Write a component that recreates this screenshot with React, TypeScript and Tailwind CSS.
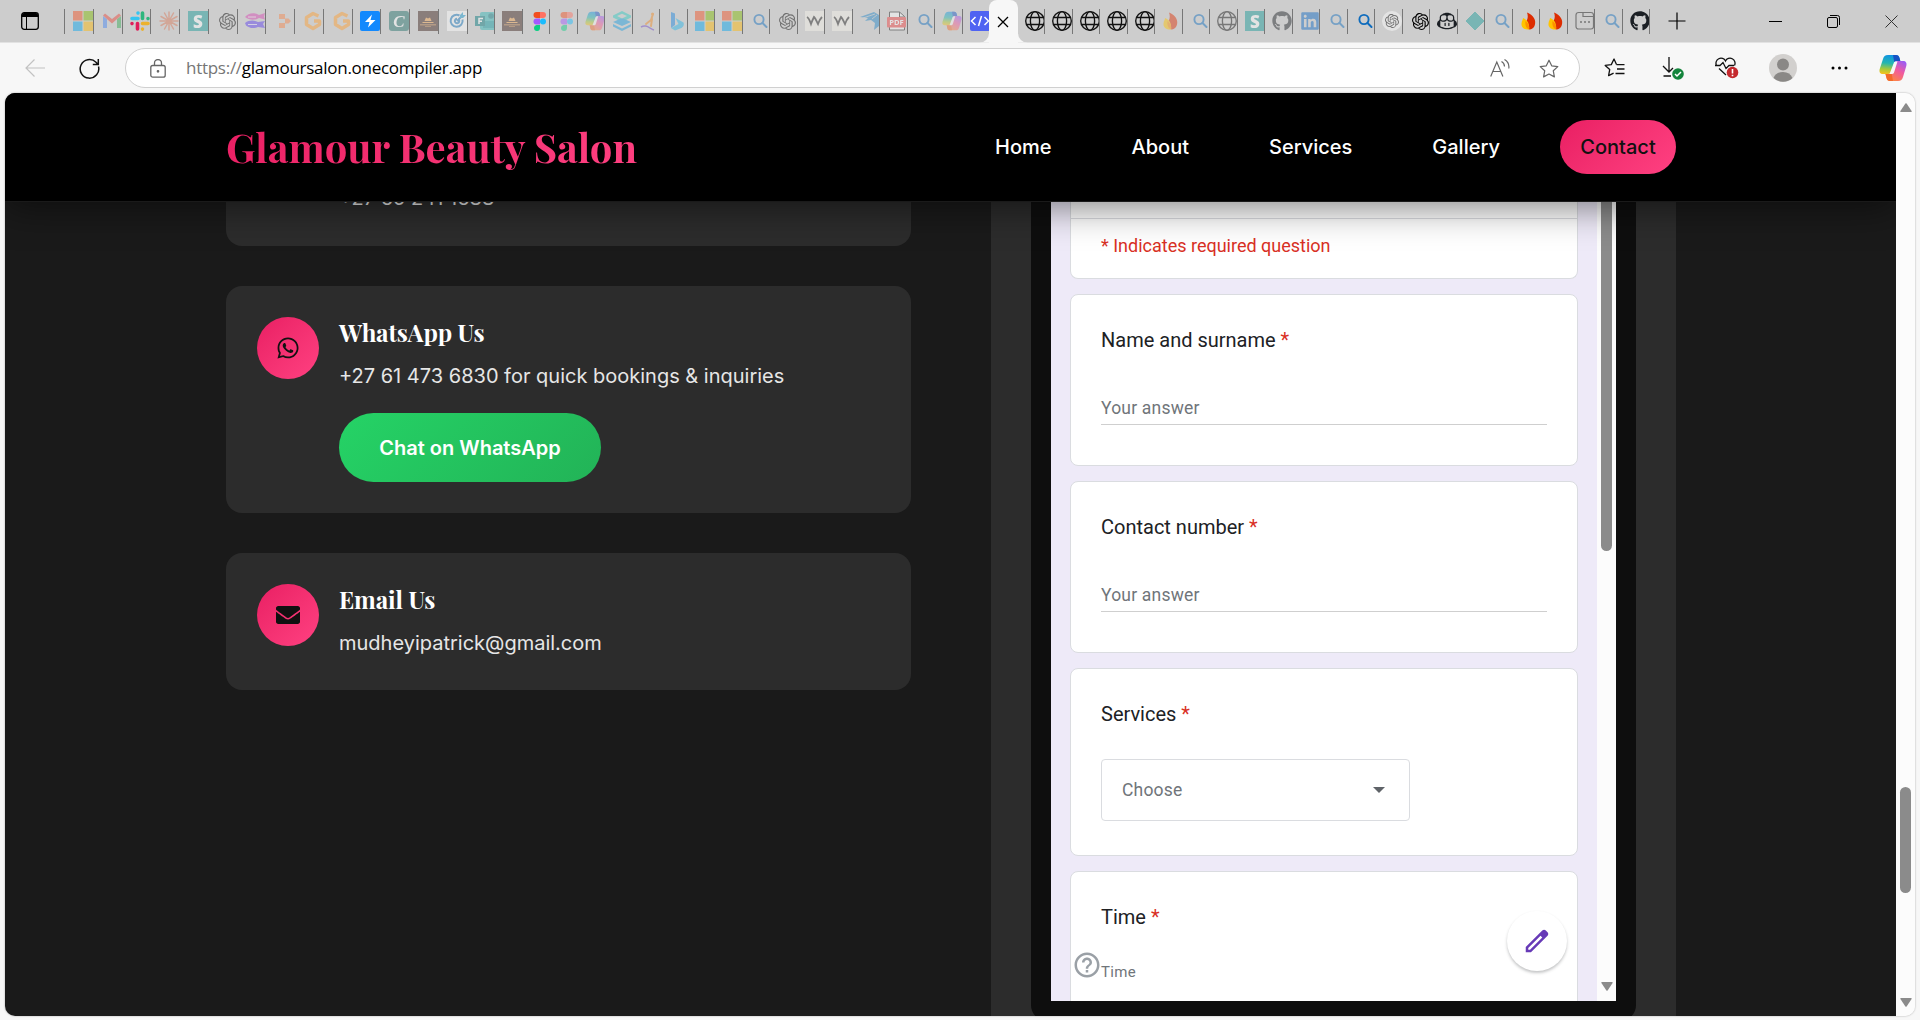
import React from 'react';
import { FaWhatsapp, FaEnvelope, FaGithub, FaLinkedin } from 'react-icons/fa';
import { SiOpenai } from 'react-icons/si';
import { GoCopilot } from 'react-icons/go';

type IconFn = () => React.ReactElement;

const Svg = ({ children, box = '0 0 20 20' }: { children: React.ReactNode; box?: string }) => (
  <svg viewBox={box} className="h-5 w-5 shrink-0" fill="none">{children}</svg>
);

const Microsoft: IconFn = () => (
  <Svg>
    <path fill="#f25022" d="M0 0h9.5v9.5H0z" /><path fill="#7fba00" d="M10.5 0H20v9.5h-9.5z" />
    <path fill="#00a4ef" d="M0 10.5h9.5V20H0z" /><path fill="#ffb900" d="M10.5 10.5H20V20h-9.5z" />
  </Svg>
);
const Gmail: IconFn = () => (
  <Svg>
    <path fill="#4285f4" d="M1 5v12h4V8z" /><path fill="#34a853" d="M15 8v9h4V5z" />
    <path fill="#ea4335" d="M1 4.500l2-2 7 5.500 7-5.500 2 2L10 12.500z" />
  </Svg>
);
const Slack: IconFn = () => (
  <Svg>
    <g strokeWidth="3.600" strokeLinecap="round">
      <path stroke="#36c5f0" d="M8 2v.1M2 7.500h6" /><path stroke="#2eb67d" d="M12.500 2v5.500M18 7.500v.1" />
      <path stroke="#e01e5a" d="M7.500 12.500V18M2 12.500v.1" /><path stroke="#ecb22e" d="M12.500 12.500H18M12.500 18v.1" />
    </g>
  </Svg>
);
const Claude: IconFn = () => (
  <Svg><path stroke="#d97757" strokeWidth="1.500" strokeLinecap="round" d="M10 1v18M1 10h18M5.500 2l9 16M14.500 2l-9 16M2 5.500l16 9M18 5.500l-16 9" /></Svg>
);
const SBox: IconFn = () => (
  <div className="flex h-5 w-5 items-center justify-center bg-[#159a98] font-['Open_Sans',sans-serif] text-[17px] leading-none font-extrabold text-white">S</div>
);
const OpenAI: IconFn = () => <SiOpenai className="h-[17px] w-[17px] text-black" />;
const OpenAIDisc: IconFn = () => (
  <div className="flex h-5 w-5 items-center justify-center rounded-full bg-white"><SiOpenai className="h-3.5 w-3.5 text-black" /></div>
);
const Fish: IconFn = () => (
  <Svg>
    <path fill="#d846b4" d="M0 6c3-4 9-5 14-2l6-2-1 3.500 1 3L14 7C9 10 4 9 0 6z" />
    <path fill="#5b3df0" d="M0 12c4-3 9-3 13-1l7-1-2 3 2 4-7-1C8 18 4 17 1 14.500z" />
    <path stroke="#fff" strokeWidth=".8" d="M3 6h8M3 13.500h9" />
  </Svg>
);
const Blocks: IconFn = () => (
  <Svg><path fill="#f58549" d="M5 3h6v5H5zM5 12h6v5H5zM11 7.500h3.500L17 10l-2.500 2.500H11z" /></Svg>
);
const GLetter: IconFn = () => (
  <Svg><path stroke="#ff9d2e" strokeWidth="3.500" strokeLinejoin="round" d="M15.500 5L10 2.500 3.500 6.500v7L10 17.500l6.500-4V10H11" /></Svg>
);
const Bolt: IconFn = () => (
  <Svg><rect width="20" height="20" rx="2" fill="#1389fd" /><path fill="#fff" d="M12 3.500L5 11h4.500L8 16.500 15.500 9h-5z" /></Svg>
);
const CBox: IconFn = () => (
  <div className="flex h-5 w-5 items-center justify-center rounded-[3px] bg-[#1f6f68] font-['Liberation_Serif',serif] text-[17px] leading-none font-bold text-white italic">C</div>
);
const HatBox: IconFn = () => (
  <Svg><path fill="#3b1f1a" d="M0 0h20v20H0z" /><path fill="#f0a048" d="M6.500 10L8 6.500l2 1 2-1 1.500 3.500zM4.500 11h11v1h-11zM2 13.500h16v.8H2zM7 15.500h6v.6H7z" /></Svg>
);
const Target: IconFn = () => (
  <Svg>
    <path fill="#fff" d="M0 0h20v20H0z" />
    <path stroke="#1b7dc4" strokeWidth="2" d="M12.500 4.500a6 6 0 1 0 3 4M10 10l6-6M12 9a2.200 2.200 0 1 1-2-1.200" /><path fill="#1b9dd4" d="M13 4l3-3v3h3l-3 3h-3z" />
  </Svg>
);
const FormsIcon: IconFn = () => (
  <Svg>
    <rect x="5" y="1" width="15" height="18" rx="2" fill="#2fb5b5" /><circle cx="16" cy="5" r="2.800" fill="#087a80" />
    <path fill="#0b9aa0" d="M8 10h12v7H8z" /><path fill="#03787c" d="M0 5h10v10H0z" /><path stroke="#fff" strokeWidth="1.500" d="M4 13V7.500h4M4 10.200h3" />
  </Svg>
);
const Figma: IconFn = () => (
  <Svg>
    <path fill="#f24e1e" d="M10 1H6.500a3 3 0 0 0 0 6H10z" /><path fill="#ff7262" d="M10 1h3a3 3 0 0 1 0 6h-3z" />
    <path fill="#a259ff" d="M10 7.500H6.500a3 3 0 0 0 0 6H10z" /><circle cx="13" cy="10.500" r="3" fill="#1abcfe" />
    <path fill="#0acf83" d="M10 14H6.500a3 3 0 1 0 3.500 3z" />
  </Svg>
);
const Copilot = ({ className = 'h-5 w-5' }: { className?: string }) => (
  <svg viewBox="0 0 28 28" className={className} fill="none">
    <defs>
      <linearGradient id="cpA" x1="8" y1="0" x2="6" y2="20" gradientUnits="userSpaceOnUse"><stop stopColor="#0d8fe8" /><stop offset=".45" stopColor="#24b6b0" /><stop offset=".75" stopColor="#a5c93b" /><stop offset="1" stopColor="#f7c21b" /></linearGradient>
      <linearGradient id="cpB" x1="24" y1="7" x2="12" y2="27" gradientUnits="userSpaceOnUse"><stop stopColor="#9a5cf5" /><stop offset=".45" stopColor="#f05aa0" /><stop offset="1" stopColor="#ff8a3a" /></linearGradient>
    </defs>
    <path fill="url(#cpA)" d="M9 1h8c2 0 3 1 3.500 3l.8 3h-3c-2 0-3 1-3.600 3l-2 7c-.7 2-1.700 3-3.700 3H4C1 20 0 18 .7 15L4 5c.8-2.600 2-4 5-4z" />
    <path fill="#1752c4" d="M14 1h3c2 0 3 1 3.500 3l.8 3h-3c-1.500 0-2.500.6-3 1.500z" />
    <path fill="url(#cpB)" d="M19 27h-8c-2 0-3-1-3.500-3l-1-4h3c2 0 3-1 3.600-3l2-7c.6-2 1.600-3 3.600-3H24c3 0 4 2 3.300 5L24 23c-.8 2.600-2 4-5 4z" />
    <path fill="#f26a2a" d="M14 27h-3c-2 0-3-1-3.500-3l-1-4h3c1.500 0 2.500-.6 3-1.500z" />
    <path fill="#f7f7f7" d="M15 8.500q.4-1 1.500-1h2L15 18.500q-.5 1.500-2 1.500h-2.500z" />
  </svg>
);
const CopilotTab: IconFn = () => <Copilot />;
const Stack: IconFn = () => (
  <Svg><path fill="#2fc9c0" d="M10 0l9 4.500v2L10 11 1 6.500v-2z" /><path fill="#1a9de0" d="M10 7l9 4-9 4-9-4zM1 13l9 4.500 9-4.500v2.500L10 20l-9-4.500z" /><path fill="#cdcdcd" d="M10 2.800l5 2.300-5 2.400-5-2.400z" /></Svg>
);
const Runner: IconFn = () => (
  <Svg><path stroke="#f08a24" strokeWidth="2" strokeLinecap="round" d="M13 3l-2 6-5 4M12 8l-1 7" /><circle cx="12.500" cy="3" r="1.500" fill="#f08a24" /><path stroke="#7048c8" strokeWidth="1.500" d="M1 16c5-3 8 1 13 3" /></Svg>
);
const Bing: IconFn = () => (
  <Svg><path fill="#1a86e0" d="M4 1l4 1.500V14l-4 3z" /><path fill="#27b4e8" d="M8.500 7l8 4.500c1 3-.5 4.500-2 5.500L8 19.500 4 17l7.500-4z" /></Svg>
);
const Search: IconFn = () => (
  <Svg><circle cx="9" cy="8.500" r="4.600" stroke="#0f6cbd" strokeWidth="1.900" /><path stroke="#0f6cbd" strokeWidth="2" strokeLinecap="round" d="M12.500 12l4 4" /></Svg>
);
const WBox: IconFn = () => (
  <Svg><path fill="#f5f3ea" d="M0 0h20v20H0z" /><path stroke="#222" strokeWidth="1.800" d="M2 6c2 1 3 4 4 7 1-3 2-5 3-7 2 2 2.500 4 4 7 1-3 2-5 4-7" /></Svg>
);
const Bird: IconFn = () => (
  <Svg><path fill="#2286c8" d="M0 6L14 1l5 3v11l-5 4 1-7-4-3-6 1 3-3z" /><path stroke="#cdcdcd" strokeWidth=".8" d="M3 7l12-4M12 8l5-4" /></Svg>
);
const Pdf: IconFn = () => (
  <Svg>
    <path fill="#fff" stroke="#222" d="M2.500 1h10l5 4.500V19h-15z" /><path stroke="#222" d="M12.500 1v5h5" />
    <rect x="0" y="6" width="19" height="10.500" rx="1" fill="#f04040" />
    <text x="9.500" y="14" textAnchor="middle" fill="#fff" className="font-['Open_Sans',sans-serif] text-[7.500px] font-bold">PDF</text>
  </Svg>
);
const Code: IconFn = () => (
  <Svg><rect width="20" height="20" rx="2" fill="#4f63f2" /><path stroke="#fff" strokeWidth="1.500" d="M5.500 6L1.500 10l4 4M14.500 6l4 4-4 4M11.500 5l-3 10" /></Svg>
);
const Globe: IconFn = () => (
  <Svg><g stroke="#111" strokeWidth="1.350"><circle cx="10" cy="10" r="9.300" /><ellipse cx="10" cy="10" rx="4.600" ry="9.300" /><path d="M1.500 6.500h17M1.500 13.500h17" /></g></Svg>
);
const Flame: IconFn = () => (
  <Svg><path fill="#dd2c00" d="M7 1.500C13 4 17 9 14.500 15c-1 2-3 3.500-5 3.500C6 17 5 12 7 9c1-2 1-5 0-7.500z" /><path fill="#ffc400" d="M3 7c3 1 7 4 6 11.500C4 19 1 16 1.500 12.500 1.700 10 3 9 3 7z" /><path fill="#ff9100" d="M5.500 10c3 2 4 5 3.800 8.500C6 17.500 5 14 5.500 10z" /></Svg>
);
const Github: IconFn = () => <FaGithub className="h-5 w-5 text-[#1b1f24]" />;
const Linkedin: IconFn = () => <FaLinkedin className="h-5 w-5 text-[#0a66c2]" />;
const CopilotFace: IconFn = () => <GoCopilot className="h-5 w-5 text-[#1b1f24]" />;
const Diamond: IconFn = () => (
  <Svg><path fill="#159a98" stroke="#159a98" strokeLinejoin="round" d="M10 1l9 9-9 9-9-9z" /></Svg>
);
const Panel: IconFn = () => (
  <Svg><g stroke="#111" strokeWidth="1.200"><rect x="1" y="1.500" width="17.500" height="16.500" rx="2.500" /><path d="M8 1.500v4h10" /></g><path stroke="#111" strokeWidth="1.500" d="M5 11h2M9 11h2M13 11h2" /></Svg>
);

type Tab = [number, IconFn, boolean?];

const leftTabs: Tab[] = [
  [29, Microsoft], [29, Gmail], [28, Slack, true], [29, Claude], [29, SBox], [29, OpenAI], [28, Fish], [29, Blocks],
  [29, GLetter], [29, GLetter], [28, Bolt, true], [29, CBox], [29, HatBox], [29, Target], [27, FormsIcon], [28, HatBox],
  [27, Figma, true], [28, Figma], [27, CopilotTab], [28, Stack], [27, Runner], [28, Bing], [27, Microsoft], [28, Microsoft],
  [27, Search], [28, OpenAI], [27, WBox], [28, WBox], [27, Bird], [28, Pdf], [27, Search], [28, CopilotTab],
];
const rightTabs: Tab[] = [
  [27, Globe, true], [28, Globe, true], [27, Globe, true], [28, Globe, true], [27, Globe, true], [28, Flame], [27, Search],
  [28, Globe], [27, SBox], [28, Github], [27, Linkedin], [28, Search], [27, Search, true], [28, OpenAIDisc], [27, OpenAI, true],
  [28, CopilotFace, true], [27, Diamond], [28, Search], [27, Flame, true], [28, Flame, true], [27, Panel], [28, Search], [27, Github, true],
];

const TabItem = ({ tab: [width, Icon, awake] }: { tab: Tab }) => (
  <div className={`flex h-[25px] shrink-0 items-center overflow-hidden border-r border-[#777] ${width === 29 ? 'pl-2' : 'pl-[7px]'}`} style={{ width }}>
    <div className={`flex h-5 w-5 shrink-0 items-center justify-center ${awake ? '' : 'opacity-45'}`}><Icon /></div>
  </div>
);

const TabStrip = () => (
  <div className="flex h-[43px] shrink-0 items-center border-b border-[#e2e2e2] bg-[#cdcdcd]">
    <svg viewBox="0 0 18 18" className="ml-[21px] h-[18px] w-[18px] shrink-0" fill="none">
      <rect x=".7" y=".7" width="16.600" height="16.600" rx="2.500" stroke="#000" strokeWidth="1.300" />
      <path fill="#000" d="M1 2.500Q1 1 3 1h12q2 0 2 1.500V5H1z" /><path stroke="#000" d="M5.500 5v12" />
    </svg>
    <div className="ml-[25px] h-[25px] w-px shrink-0 bg-[#777]" />
    <div className="flex shrink-0">{leftTabs.map((t, i) => <TabItem key={i} tab={t} />)}</div>
    <div className="flex w-[26px] shrink-0 overflow-hidden pl-[7px]"><Code /></div>
    <div className="relative flex h-[43px] w-[29px] shrink-0 items-center justify-center rounded-t-lg bg-[#f7f7f7] before:absolute before:bottom-0 before:-left-2.5 before:h-2.5 before:w-2.5 before:rounded-br-[10px] before:shadow-[5px_5px_0_4px_#f7f7f7] before:[clip-path:inset(0)] after:absolute after:-right-2.5 after:bottom-0 after:h-2.5 after:w-2.5 after:rounded-bl-[10px] after:shadow-[-5px_5px_0_4px_#f7f7f7] after:[clip-path:inset(0)]">
      <svg viewBox="0 0 12 12" className="mt-px mr-px h-3 w-3" stroke="#000" strokeWidth="1.300"><path d="M1 1l10 10M11 1L1 11" /></svg>
    </div>
    <div className="flex shrink-0">{rightTabs.map((t, i) => <TabItem key={i} tab={t} />)}</div>
    <svg viewBox="0 0 18 18" className="ml-[18px] h-[18px] w-[18px] shrink-0" stroke="#000" strokeWidth="1.200"><path d="M9 .5v17M.5 9h17" /></svg>
    <div className="mr-[22px] ml-auto flex items-center gap-[45px]">
      <svg viewBox="0 0 13 13" className="h-[13px] w-[13px]" stroke="#000"><path d="M0 6.500h13" /></svg>
      <svg viewBox="0 0 13 13" className="h-[13px] w-[13px]" fill="none" stroke="#000"><rect x=".5" y="2.500" width="10" height="10" rx="1.500" /><path d="M3 .5h7.500a2 2 0 0 1 2 2V10" /></svg>
      <svg viewBox="0 0 13 13" className="h-[13px] w-[13px]" stroke="#333"><path d="M.5.5l12 12M12.500.5l-12 12" /></svg>
    </div>
  </div>
);

const starPath = 'M10 1.200l2.700 5.600 6.100.8-4.500 4.200 1.100 6.100L10 15l-5.400 2.900 1.100-6.100L1.200 7.600l6.100-.8z';

const Toolbar = () => (
  <div className="flex h-[50px] shrink-0 items-center bg-[#f7f7f7]">
    <svg viewBox="0 0 20 18" className="ml-[25px] h-[18px] w-5 shrink-0" fill="none" stroke="#c2c2c2" strokeWidth="1.200"><path d="M20 9H1M9.500.5L1 9l8.500 8.500" /></svg>
    <svg viewBox="0 0 21 21" className="ml-[34px] h-[21px] w-[21px] shrink-0" fill="none" stroke="#111" strokeWidth="1.500"><path d="M19.500 8.500a9.300 9.300 0 1 1-2.500-4.300l2 2.300M19.300 1v5.500h-5.500" /></svg>
    <div className="ml-[25px] flex h-10 w-[1455px] shrink-0 items-center rounded-full border border-[#d0d0d0] bg-white">
      <svg viewBox="0 0 16 19" className="ml-6 h-[19px] w-4" fill="none" stroke="#666" strokeWidth="1.300"><rect x=".8" y="6.500" width="14.400" height="11.700" rx="2" /><path d="M4.500 6.500V4a3.500 3.500 0 0 1 7 0v2.500" /><circle cx="8" cy="12.300" r=".7" fill="#666" /></svg>
      <div className="ml-5 font-['Open_Sans',sans-serif] text-[17px] tracking-[-0.27px] whitespace-pre text-black"><span className="text-[#767676]">https://</span>glamoursalon.onecompiler.app</div>
      <svg viewBox="0 0 20 18" className="mr-[29px] ml-auto h-[18px] w-5" fill="none" stroke="#666" strokeWidth="1.200"><path d="M.7 17.500L6.800 3l6.100 14.500M3 12.500h7.600M11.500 2.500a6 6 0 0 1 3 5M14.500.5a9 9 0 0 1 4.300 9" /></svg>
      <svg viewBox="0 0 20 19" className="mr-5 h-[19px] w-5" fill="none" stroke="#666" strokeWidth="1.200" strokeLinejoin="round"><path d={starPath} /></svg>
    </div>
    <svg viewBox="0 0 21 20" className="ml-[24px] h-5 w-[21px] shrink-0" fill="none" stroke="#111" strokeWidth="1.300" strokeLinejoin="round"><path d="M12.500 6.500L10 1 7.300 6.600l-6.100.8 4.500 4.200-1.100 6.100 5-2.500M12.500 6.600h8M13 11h7.500M11.500 15.500h9" /></svg>
    <svg viewBox="0 0 22 24" className="ml-[37px] h-6 w-[22px] shrink-0" fill="none"><path stroke="#111" strokeWidth="1.300" d="M7 1v14.500M1 10l6 6 4-4M1.500 20H9" /><circle cx="16" cy="18" r="5.800" fill="#13843c" /><path stroke="#fff" strokeWidth="1.500" d="M13 18l2 2 4-4" /></svg>
    <svg viewBox="0 0 24 22" className="ml-[31px] h-[22px] w-6 shrink-0" fill="none"><path stroke="#111" strokeWidth="1.300" d="M1.500 8.500A5 5 0 0 1 10.500 4 5 5 0 0 1 19.500 8.500M0 8.500h5l3-3 3 6 3-3h5M4 11.500l7 6.500" /><circle cx="17.500" cy="15.500" r="5.800" fill="#c4282d" /><path stroke="#fff" strokeWidth="1.600" d="M17.500 12v4.500M17.500 17.700v1.500" /></svg>
    <svg viewBox="0 0 28 28" className="ml-[30px] h-7 w-7 shrink-0"><circle cx="14" cy="14" r="14" fill="#d2d0ce" /><circle cx="14" cy="10.500" r="6" fill="#8a8886" /><path fill="#8a8886" d="M4.500 24Q7 18 14 18t9.500 6A14 14 0 0 1 4.500 24z" /></svg>
    <svg viewBox="0 0 17 4" className="ml-[34px] h-1 w-[17px] shrink-0"><circle cx="2" cy="2" r="1.500" /><circle cx="8.500" cy="2" r="1.500" /><circle cx="15" cy="2" r="1.500" /></svg>
    <Copilot className="ml-[31px] h-7 w-7 shrink-0" />
  </div>
);

const pink = 'bg-linear-135 from-[#e91e63] to-[#ff4081]';

const Navbar = () => (
  <header className="relative z-10 flex h-[109px] shrink-0 items-center justify-between border-b border-[#1a1a1a] bg-black pr-[220px] pb-px pl-[221px] shadow-[0_5px_37px_rgba(0,0,0,0.5)]">
    <h1 className="w-max bg-linear-135 from-[#e91e63] to-[#ff4081] bg-clip-text font-['Playfair_Display','Liberation_Serif',serif] text-[40px] leading-[54px] font-bold text-transparent">Glamour Beauty Salon</h1>
    <nav className="flex items-center gap-10 font-['Inter',sans-serif] text-[20px] leading-[30px] font-medium text-white">
      {['Home', 'About', 'Services', 'Gallery'].map((l) => <a key={l} className="px-5 py-3">{l}</a>)}
      <a className={`w-[116px] rounded-full py-3 text-center text-[#111] ${pink}`}>Contact</a>
    </nav>
  </header>
);

const InfoCard = ({ className, icon, title, text, children }: { className: string; icon: React.ReactNode; title: string; text: string; children?: React.ReactNode }) => (
  <section className={`flex gap-5 rounded-2xl bg-[#2c2c2c] px-[31px] pt-[31px] ${className}`}>
    <div className={`flex h-[62px] w-[62px] shrink-0 items-center justify-center rounded-full text-[#111] ${pink}`}>{icon}</div>
    <div className="min-w-0 text-white">
      <h2 className="w-max font-['Playfair_Display','Liberation_Serif',serif] text-[24px] leading-[31px] font-bold tracking-[-0.1px]">{title}</h2>
      <p className="mt-3 w-max font-['Inter',sans-serif] text-[20px] leading-8 text-[#e6e6e6]">{text}</p>
      {children}
    </div>
  </section>
);

const ContactInfo = () => (
  <div className="flex w-[685px] flex-col">
    <section className="flex h-[44px] items-start overflow-hidden rounded-b-2xl bg-[#2c2c2c] pl-[113px]">
      <p className="-mt-[20px] font-['Inter',sans-serif] text-[20px] leading-8 text-[#e6e6e6]">+27 65 241 1688</p>
    </section>
    <InfoCard className="mt-10 h-[227px]" icon={<FaWhatsapp className="h-6 w-6" />} title="WhatsApp Us" text="+27 61 473 6830 for quick bookings & inquiries">
      <button className="mt-[21px] flex h-[69px] w-[262px] items-center justify-center rounded-full bg-linear-135 from-[#25d366] to-[#22b357] font-['Inter',sans-serif] text-[20px] font-semibold text-white">Chat on WhatsApp</button>
    </InfoCard>
    <InfoCard className="mt-10 h-[137px]" icon={<FaEnvelope className="h-6 w-6" />} title="Email Us" text="mudheyipatrick@gmail.com" />
  </div>
);

const Question = ({ label, className, children }: { label: string; className: string; children: React.ReactNode }) => (
  <section className={`mt-[15px] shrink-0 rounded-lg border border-[#dadce0] bg-white px-[30px] pt-[30px] ${className}`}>
    <h3 className="text-[20px] leading-[30px] text-[#202124]">{label} <span className="text-[#d93025]">*</span></h3>
    {children}
  </section>
);

const Answer = () => <div className="mt-[38px] h-[32px] w-[446px] border-b border-[#cfcfcf] text-[17.500px] leading-[30px] tracking-[0.2px] text-[#70757a]">Your answer</div>;

const BookingForm = () => (
  <div className="flex h-full w-[685px] justify-center bg-[#2c2c2c]">
    <div className="h-[819px] w-[605px] rounded-b-2xl bg-[#0e0e0e] px-5">
      <div className="relative flex h-[799px] overflow-hidden bg-[#eeeaf8] font-['Roboto',sans-serif]">
        <div className="flex w-[546px] flex-col px-[19px]">
          <section className="h-[77px] shrink-0 rounded-b-lg border border-t-0 border-[#dadce0] bg-white">
            <div className="h-[17px] border-b border-[#dadce0]" />
            <p className="px-[30px] pt-[13px] text-[18px] leading-[28px] text-[#d93025]">* Indicates required question</p>
          </section>
          <Question label="Name and surname" className="h-[172px]"><Answer /></Question>
          <Question label="Contact number" className="h-[172px]"><Answer /></Question>
          <Question label="Services" className="h-[188px]">
            <div className="mt-[30px] flex h-[62px] w-[309px] items-center justify-between rounded border border-[#dadce0] pr-[24px] pl-5 text-[17.500px] tracking-[0.2px] text-[#70757a]">
              Choose
              <svg viewBox="0 0 12 6" className="h-1.5 w-3" fill="#5f6368"><path d="M0 0h12L6 6z" /></svg>
            </div>
          </Question>
          <Question label="Time" className="h-[187px]">
            <p className="mt-[29px] text-[15px] leading-[22px] tracking-[0.3px] text-[#70757a]">Time</p>
          </Question>
        </div>
        <div className="flex w-[19px] flex-col items-center bg-[#fcfcfc]">
          <div className="h-[349px] w-[11px] rounded-b-full bg-[#8b8b8b]" />
          <svg viewBox="0 0 12 9" className="mt-auto mb-2.5 h-[9px] w-3" fill="#8b8b8b"><path d="M1 0h10q1 0 .6 1L6.600 8.400q-.6.8-1.200 0L.4 1Q0 0 1 0z" /></svg>
        </div>
        <svg viewBox="0 0 24 24" className="absolute bottom-[21px] left-[21px] h-[30px] w-[30px]" fill="#9aa0a6"><path d="M11 18h2v-2h-2v2zm1-16C6.480 2 2 6.480 2 12s4.480 10 10 10 10-4.480 10-10S17.520 2 12 2zm0 18c-4.410 0-8-3.590-8-8s3.590-8 8-8 8 3.590 8 8-3.590 8-8 8zm0-14c-2.210 0-4 1.790-4 4h2c0-1.100.9-2 2-2s2 .9 2 2c0 2-3 1.750-3 5h2c0-2.250 3-2.500 3-5 0-2.210-1.790-4-4-4z" /></svg>
        <div className="absolute right-[49px] bottom-[30px] flex h-[60px] w-[60px] items-center justify-center rounded-full bg-white shadow-[0_2px_3px_rgba(60,64,67,0.3)]">
          <svg viewBox="0 0 24 24" className="h-[30px] w-[30px]" fill="#673ab7"><path d="M20.410 4.940l-1.350-1.350c-.78-.78-2.050-.78-2.830 0L3 16.820V21h4.180L20.410 7.770c.79-.78.79-2.050 0-2.830zM6.410 19.060L5 19v-1.360l9.820-9.820 1.410 1.410-9.820 9.830z" /></svg>
        </div>
      </div>
    </div>
  </div>
);

const PageScrollbar = () => (
  <div className="flex w-[19px] shrink-0 flex-col items-center bg-[#fcfcfc]">
    <svg viewBox="0 0 12 9" className="mt-2.5 h-[9px] w-3 rotate-180" fill="#8b8b8b"><path d="M1 0h10q1 0 .6 1L6.600 8.400q-.6.8-1.200 0L.4 1Q0 0 1 0z" /></svg>
    <div className="mt-[675px] h-[106px] w-[11px] rounded-full bg-[#8b8b8b]" />
    <svg viewBox="0 0 12 9" className="mt-auto mb-[9px] h-[9px] w-3" fill="#8b8b8b"><path d="M1 0h10q1 0 .6 1L6.600 8.400q-.6.8-1.200 0L.4 1Q0 0 1 0z" /></svg>
  </div>
);

export default function App() {
  return (
    <div className="flex h-[1020px] w-[1920px] flex-col overflow-hidden bg-[#f7f7f7]">
      <TabStrip />
      <Toolbar />
      <div className="mr-[5px] ml-[5px] flex h-[923px] shrink-0 overflow-hidden rounded-[10px] shadow-[0_0_2px_rgba(0,0,0,0.35)]">
        <div className="flex w-[1891px] flex-col overflow-hidden bg-[#1a1a1a]">
          <Navbar />
          <main className="flex min-h-0 flex-1 justify-between overflow-hidden pr-[220px] pl-[221px]">
            <ContactInfo />
            <BookingForm />
          </main>
        </div>
        <PageScrollbar />
      </div>
    </div>
  );
}
